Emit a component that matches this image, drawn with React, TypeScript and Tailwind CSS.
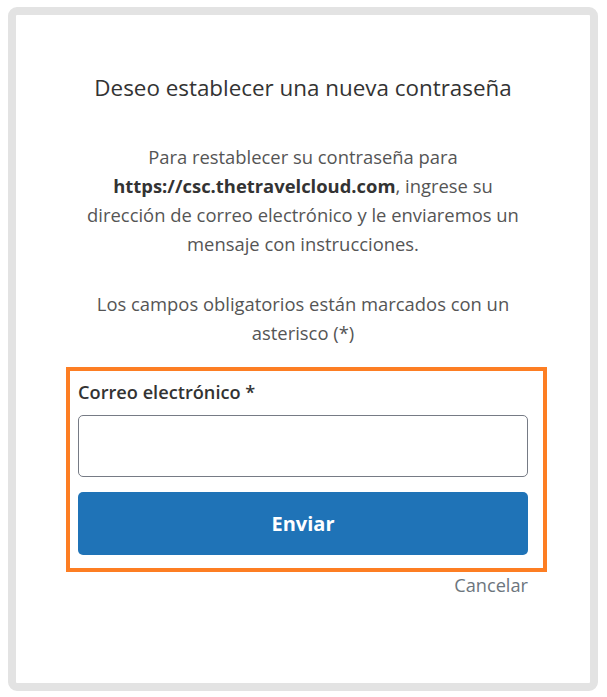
import React from 'react';

const font = { fontFamily: '"Open Sans", "Noto Sans", Arial, sans-serif' };

export default function App() {
  return (
    <div className="min-h-screen bg-white pt-[7px] pl-[8px] pr-[9px] pb-[6px]" style={font}>
      <div className="h-[684px] rounded-[9px] border-[8px] border-[#e3e3e3] bg-white">
        <div className="mx-auto flex w-[450px] flex-col items-center pt-[58px]">
          <h1 className="whitespace-nowrap text-[22.4px] leading-[30px] text-[#333333]">
            Deseo establecer una nueva contraseña
          </h1>

          <p className="mt-[39px] text-center text-[18.4px] leading-[29px] text-[#555555]">
            <span className="block whitespace-nowrap">Para restablecer su contraseña para</span>
            <span className="block whitespace-nowrap">
              <strong className="font-bold text-[#333333]">https://csc.thetravelcloud.com</strong>, ingrese su
            </span>
            <span className="block whitespace-nowrap">dirección de correo electrónico y le enviaremos un</span>
            <span className="block whitespace-nowrap">mensaje con instrucciones.</span>
          </p>

          <p className="mt-[31px] text-center text-[18.4px] leading-[29px] text-[#555555]">
            <span className="block whitespace-nowrap">Los campos obligatorios están marcados con un</span>
            <span className="block whitespace-nowrap">asterisco (*)</span>
          </p>
        </div>

        <div className="ml-[50px] mt-[20px] w-[481px] border-[4px] border-[#fd7e23] pb-[13px] pl-[8px] pr-[15px] pt-[9px]">
          <label className="block text-[18.2px] font-semibold leading-[24px] text-[#333333]">
            Correo electrónico *
          </label>
          <input
            type="email"
            className="mt-[11px] block h-[62px] w-[450px] rounded-[5px] border border-[#767b85] bg-white px-3 text-[18px] outline-none"
          />
          <button className="mt-[15px] flex h-[63px] w-[450px] items-center justify-center rounded-[5px] bg-[#1f73b7] text-[20px] font-bold text-white">
            Enviar
          </button>
        </div>

        <div className="mx-auto mt-[1px] flex w-[450px] justify-end">
          <a className="text-[18.2px] leading-[24px] text-[#6c757d]">Cancelar</a>
        </div>
      </div>
    </div>
  );
}
